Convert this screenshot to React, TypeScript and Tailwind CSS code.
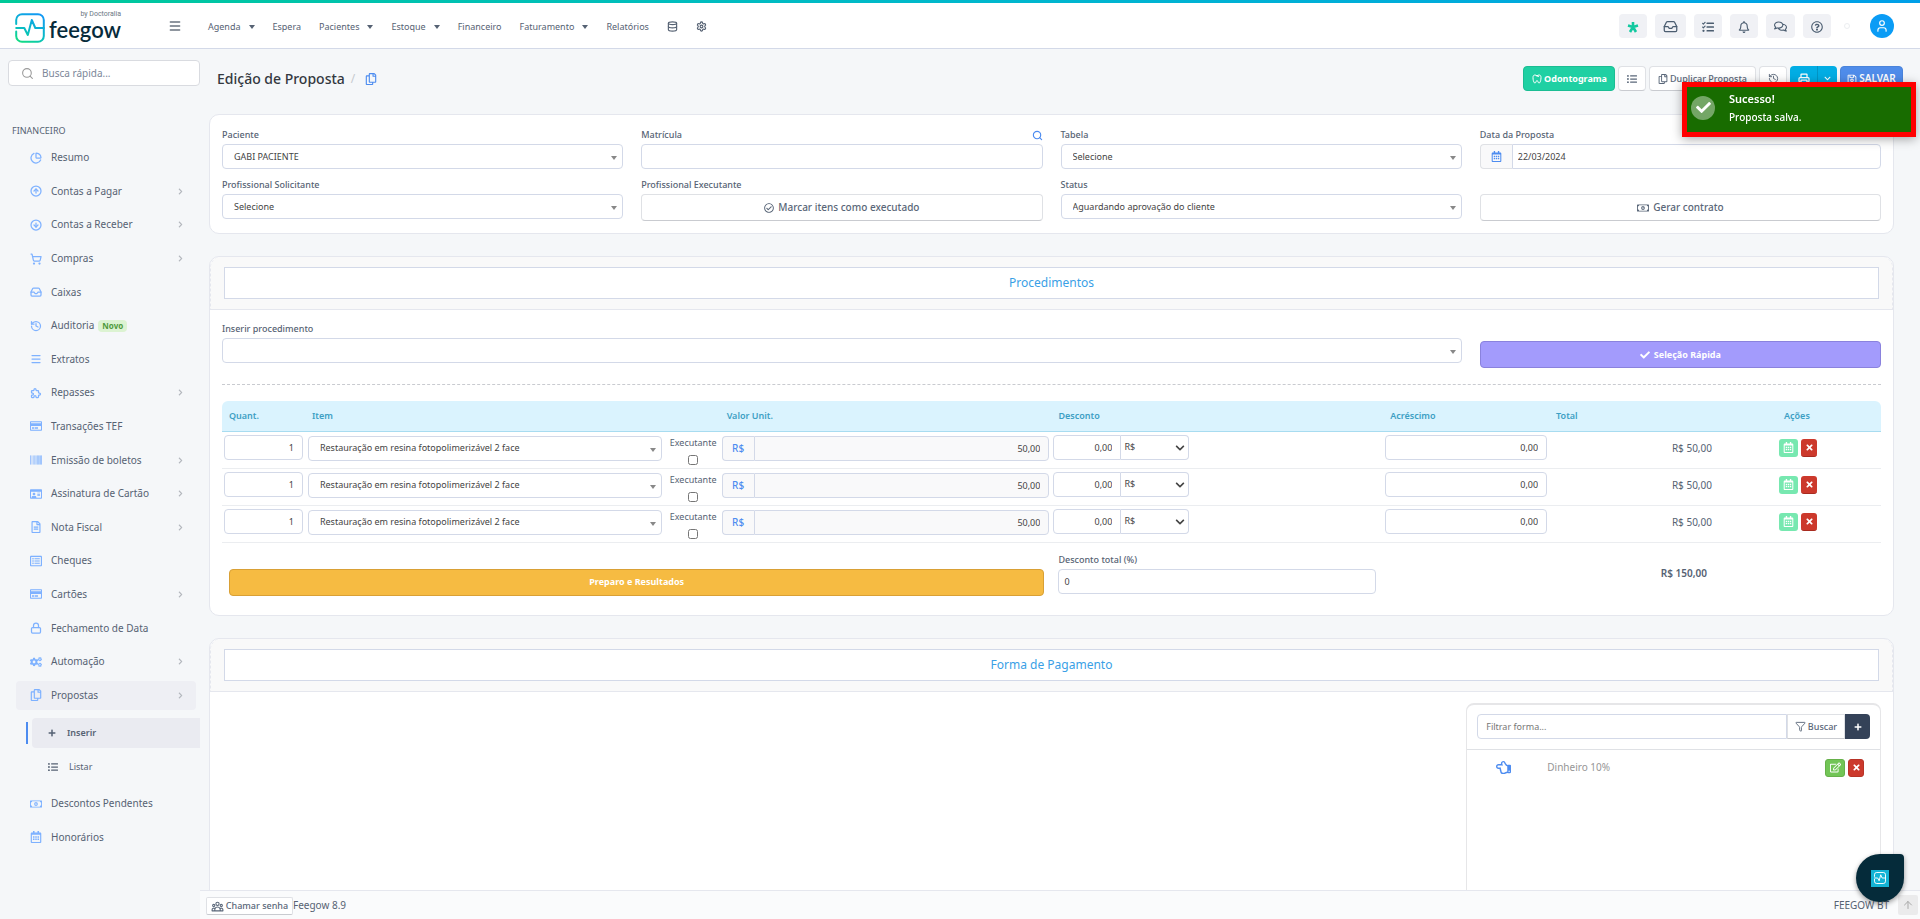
import { useState, type ReactNode } from "react";
import clsx from "clsx";
import type { IconType } from "react-icons";
import {
  FaBarcode,
  FaCheck,
  FaChevronDown,
  FaChevronRight,
  FaCogs,
  FaListUl,
  FaPlus,
  FaRegBell,
  FaRegCalendarAlt,
  FaRegCheckCircle,
  FaRegComments,
  FaRegCopy,
  FaRegCreditCard,
  FaRegEdit,
  FaRegFileAlt,
  FaRegHandPointLeft,
  FaRegIdCard,
  FaRegListAlt,
  FaRegMoneyBillAlt,
  FaRegQuestionCircle,
  FaRegSave,
  FaTasks,
  FaTimes,
} from "react-icons/fa";
import { HiOutlineUserGroup } from "react-icons/hi";
import { TbDental, TbPuzzle } from "react-icons/tb";
import {
  ArrowUp,
  ChartPie,
  CircleArrowDown,
  CircleArrowUp,
  Database,
  Funnel,
  History,
  Inbox,
  Lock,
  Menu,
  Printer,
  Search,
  Settings,
  ShoppingCart,
  User,
} from "lucide-react";

type Icon = IconType | typeof Menu;

interface MenuItem {
  label: string;
  icon: Icon;
  arrow?: boolean;
  badge?: string;
  active?: boolean;
}

const topMenu = [
  { label: "Agenda", caret: true },
  { label: "Espera" },
  { label: "Pacientes", caret: true },
  { label: "Estoque", caret: true },
  { label: "Financeiro" },
  { label: "Faturamento", caret: true },
  { label: "Relatórios" },
];

const sideMenu: MenuItem[] = [
  { label: "Resumo", icon: ChartPie },
  { label: "Contas a Pagar", icon: CircleArrowUp, arrow: true },
  { label: "Contas a Receber", icon: CircleArrowDown, arrow: true },
  { label: "Compras", icon: ShoppingCart, arrow: true },
  { label: "Caixas", icon: Inbox },
  { label: "Auditoria", icon: History, badge: "Novo" },
  { label: "Extratos", icon: Menu },
  { label: "Repasses", icon: TbPuzzle, arrow: true },
  { label: "Transações TEF", icon: FaRegCreditCard },
  { label: "Emissão de boletos", icon: FaBarcode, arrow: true },
  { label: "Assinatura de Cartão", icon: FaRegIdCard, arrow: true },
  { label: "Nota Fiscal", icon: FaRegFileAlt, arrow: true },
  { label: "Cheques", icon: FaRegListAlt },
  { label: "Cartões", icon: FaRegCreditCard, arrow: true },
  { label: "Fechamento de Data", icon: Lock },
  { label: "Automação", icon: FaCogs, arrow: true },
  { label: "Propostas", icon: FaRegCopy, arrow: true, active: true },
];

const sideMenuEnd: MenuItem[] = [
  { label: "Descontos Pendentes", icon: FaRegMoneyBillAlt },
  { label: "Honorários", icon: FaRegCalendarAlt },
];

const items = [1, 2, 3].map((id) => ({ id, name: "Restauração em resina fotopolimerizável 2 face" }));

const field = "block h-[25px] w-full rounded border border-[#d3d9e8] text-[9px] text-[#444] outline-none";
const defaultButton = "rounded border border-[#dfe1e5] border-b-[#c9cbd0] bg-white text-[#5a6779]";

function Caret({ className }: { className?: string }) {
  return (
    <svg viewBox="0 0 6 4" className={clsx("w-1.5 fill-current", className)} aria-hidden="true">
      <path d="M0 0h6L3 4z" />
    </svg>
  );
}

function Pulse() {
  return (
    <g fill="none" strokeLinecap="round" strokeLinejoin="round">
      <path d="M1.2 11V7a5.8 5.8 0 0 1 5.8-5.8h16a5.8 5.8 0 0 1 5.8 5.8v8h-8.5l-3.5-8-4 15-3.5-7H1.2" />
      <path d="M1.2 18.500V23a5.8 5.8 0 0 0 5.8 5.8h16a5.8 5.8 0 0 0 5.8-5.8v-8" />
    </g>
  );
}

function Logo() {
  return (
    <a href="#" className="flex items-center gap-1" aria-label="feegow by Doctoralia">
      <svg viewBox="0 0 30 30" className="mt-1 h-[30px] w-[30px] shrink-0" stroke="url(#brand)" strokeWidth="2">
        <defs>
          <linearGradient id="brand" x1="22" y1="0" x2="8" y2="30" gradientUnits="userSpaceOnUse">
            <stop offset="0" stopColor="#1298f5" />
            <stop offset="0.6" stopColor="#08bcc4" />
            <stop offset="1" stopColor="#12dc84" />
          </linearGradient>
        </defs>
        <Pulse />
      </svg>
      <span className="flex flex-col items-end">
        <span className="font-[Roboto] text-[7px] leading-2 text-[#6a7783]">by Doctoralia</span>
        <span className="font-[Lato] text-[22px] leading-6 font-semibold text-[#062b3b]">feegow</span>
      </span>
    </a>
  );
}

function HeaderButton({ label, children }: { label: string; children: ReactNode }) {
  return (
    <button
      type="button"
      aria-label={label}
      className="flex h-6 items-center justify-center rounded bg-[#f0f1f5] px-2 pt-0.5 text-[#4b5d70]"
    >
      {children}
    </button>
  );
}

function Header() {
  return (
    <header className="shrink-0 border-b border-[#d3d9e8] bg-white">
      <div className="h-[3px] bg-linear-to-r from-[#00c998] via-[#00b8cc] to-[#009fe8]" />
      <div className="flex h-[45px] items-center">
        <div className="flex w-[200px] shrink-0 items-center justify-between pr-[18px] pl-[15px]">
          <Logo />
          <button type="button" aria-label="Menu" className="text-[#6b7480]">
            <Menu size={14} strokeWidth={2.5} />
          </button>
        </div>
        <nav className="flex items-center gap-[18px] pt-0.5 pl-2 text-[9px] text-[#566273]">
          {topMenu.map((item) => (
            <a key={item.label} href="#" className="flex items-center gap-2">
              {item.label}
              {item.caret && <Caret className="h-1" />}
            </a>
          ))}
          <a href="#" aria-label="Dados">
            <Database size={11} strokeWidth={2.5} />
          </a>
          <a href="#" aria-label="Configurações">
            <Settings size={11} strokeWidth={2.5} />
          </a>
        </nav>
        <div className="ml-auto flex items-center gap-2 pr-[26px]">
          <HeaderButton label="Novidades">
            <svg viewBox="0 0 12 12" className="h-3 w-3" stroke="#12c9a0" strokeWidth="2.6" aria-hidden="true">
              <path d="M6 1v5M1 4.500l5 1.500M11 4.500L6 6M3 11l3-5M9 11L6 6" />
            </svg>
          </HeaderButton>
          <HeaderButton label="Caixa">
            <Inbox size={15} />
          </HeaderButton>
          <HeaderButton label="Tarefas">
            <FaTasks size={12} />
          </HeaderButton>
          <HeaderButton label="Notificações">
            <FaRegBell size={12} />
          </HeaderButton>
          <HeaderButton label="Mensagens">
            <FaRegComments size={13} />
          </HeaderButton>
          <HeaderButton label="Ajuda">
            <FaRegQuestionCircle size={12} />
          </HeaderButton>
          <span className="mr-3 ml-[5px] h-1.5 w-1.5 rounded-full border border-[#eceef1]" />
          <button
            type="button"
            aria-label="Perfil"
            className="flex h-6 w-6 items-center justify-center rounded-full bg-[#0a9cf5] text-white"
          >
            <User size={14} strokeWidth={2} />
          </button>
        </div>
      </div>
    </header>
  );
}

function SideLink({ item }: { item: MenuItem }) {
  const ItemIcon = item.icon;
  return (
    <li className="flex items-center pr-1 pl-4">
      <a
        href="#"
        className={clsx("flex h-[29px] w-full items-center rounded pr-3 pl-3.5", item.active && "bg-[#eeeff4]")}
      >
        <ItemIcon size={12} strokeWidth={2.5} className="shrink-0 text-[#7fb2ff]" />
        <span className="ml-[9px]">{item.label}</span>
        {item.badge && (
          <span className="ml-1 rounded-sm bg-[#dcf3d2] px-1 text-[8px] leading-3 font-bold text-[#4f9a3c]">
            {item.badge}
          </span>
        )}
        {item.arrow && <FaChevronRight size={7} className="ml-auto text-[#b3b7bd]" />}
      </a>
    </li>
  );
}

function Sidebar() {
  return (
    <aside className="w-[200px] shrink-0 overflow-hidden text-[10px] text-[#566273]">
      <div className="pt-[11px] pl-2">
        <label className="flex h-[26px] items-center gap-2 rounded border border-[#d9dbe0] bg-white pl-3">
          <Search size={13} className="shrink-0 text-[#9a9a9a]" />
          <input
            type="search"
            aria-label="Busca rápida"
            placeholder="Busca rápida..."
            className="w-full text-[10px] outline-none placeholder:text-[#7c8799]"
          />
        </label>
      </div>
      <h2 className="mt-[38px] pl-3 text-[9px] leading-[14px]">FINANCEIRO</h2>
      <ul className="mt-[3px] grid h-[571px] auto-rows-fr">
        {sideMenu.map((item) => (
          <SideLink key={item.label} item={item} />
        ))}
      </ul>
      <ul className="mt-1.5 pl-[26px]">
        <li className="flex h-[30px] items-center">
          <span className="h-[22px] w-0.5 bg-[#4d8cf0]" />
          <a href="#" className="ml-1 flex h-full flex-1 items-center gap-[11px] rounded-l bg-[#eaebf1] pl-4 text-[9px] font-semibold">
            <FaPlus size={8} />
            Inserir
          </a>
        </li>
        <li className="mt-1 flex h-[30px] items-center pl-[22px]">
          <a href="#" className="flex items-center gap-[11px] text-[9px]">
            <FaListUl size={10} />
            Listar
          </a>
        </li>
      </ul>
      <ul className="mt-[5px] grid h-[67px] auto-rows-fr">
        {sideMenuEnd.map((item) => (
          <SideLink key={item.label} item={item} />
        ))}
      </ul>
    </aside>
  );
}

function PageTitle() {
  return (
    <div className="flex items-center justify-between pt-[17px] pb-[23px] pl-2">
      <div className="flex items-center gap-1.5">
        <h1 className="text-sm font-medium text-[#333840]">Edição de Proposta</h1>
        <span className="text-xs text-[#c6cacf]">/</span>
        <FaRegCopy size={12} className="ml-1 text-[#4d8cf0]" />
      </div>
      <div className="-mr-[9px] flex h-[25px] items-stretch gap-[3px] text-[9px]">
        <button
          type="button"
          className="flex items-center justify-center gap-px rounded border border-[#1bbd93] bg-[#1fd0a3] px-[7px] font-bold text-white"
        >
          <TbDental size={12} />
          Odontograma
        </button>
        <button type="button" aria-label="Lista" className={clsx(defaultButton, "flex w-7 items-center justify-center")}>
          <FaListUl size={10} />
        </button>
        <button type="button" className={clsx(defaultButton, "flex w-[107px] items-center justify-center gap-0.5 font-medium")}>
          <FaRegCopy size={10} />
          Duplicar Proposta
        </button>
        <button type="button" aria-label="Histórico" className={clsx(defaultButton, "flex w-7 items-center justify-center")}>
          <History size={11} />
        </button>
        <div className="flex rounded bg-[#02ade4] text-white">
          <button type="button" aria-label="Imprimir" className="flex w-7 items-center justify-center border-r border-[#0295c5]">
            <Printer size={12} strokeWidth={2.5} />
          </button>
          <button type="button" aria-label="Opções" className="flex w-[19px] items-center justify-center">
            <FaChevronDown size={7} />
          </button>
        </div>
        <button
          type="button"
          className="flex w-[63px] items-center justify-center gap-0.5 rounded border border-[#4a84db] bg-[#4f8cea] text-[10px] font-semibold text-white"
        >
          <FaRegSave size={10} />
          SALVAR
        </button>
      </div>
    </div>
  );
}

function SelectField({ id, value, label }: { id: string; value: string; label?: string }) {
  return (
    <div className="relative">
      <select id={id} aria-label={label} className={clsx(field, "appearance-none bg-white pr-5 pl-[11px]")}>
        <option>{value}</option>
      </select>
      <Caret className="pointer-events-none absolute top-3 right-1.5 h-1 text-[#888]" />
    </div>
  );
}

function Label({ htmlFor, children }: { htmlFor: string; children: ReactNode }) {
  return (
    <label htmlFor={htmlFor} className="block text-[9px] leading-[18px] font-medium text-[#566273]">
      {children}
    </label>
  );
}

function ProposalForm() {
  return (
    <section className="grid grid-cols-4 gap-x-[18px] gap-y-[7px] rounded-[10px] border border-[#e5e7ee] bg-white px-3 pt-[11px] pb-3">
      <div>
        <Label htmlFor="paciente">Paciente</Label>
        <SelectField id="paciente" value="GABI PACIENTE" />
      </div>
      <div>
        <div className="flex items-center justify-between">
          <Label htmlFor="matricula">Matrícula</Label>
          <Search size={11} strokeWidth={2.5} className="text-[#4d8cf0]" />
        </div>
        <input id="matricula" className={clsx(field, "bg-white px-2")} />
      </div>
      <div>
        <Label htmlFor="tabela">Tabela</Label>
        <SelectField id="tabela" value="Selecione" />
      </div>
      <div>
        <Label htmlFor="data">Data da Proposta</Label>
        <div className="flex">
          <span className="flex w-8 shrink-0 items-center justify-center rounded-l border border-r-0 border-[#dfe1e5] bg-[#f9f9fa]">
            <FaRegCalendarAlt size={11} className="text-[#4d8cf0]" />
          </span>
          <input id="data" defaultValue="22/03/2024" className={clsx(field, "rounded-l-none bg-white px-[5px]")} />
        </div>
      </div>
      <div>
        <Label htmlFor="solicitante">Profissional Solicitante</Label>
        <SelectField id="solicitante" value="Selecione" />
      </div>
      <div>
        <Label htmlFor="executante">Profissional Executante</Label>
        <button
          id="executante"
          type="button"
          className={clsx(defaultButton, "flex h-[27px] w-full items-center justify-center gap-1 text-[10px] font-medium")}
        >
          <FaRegCheckCircle size={10} />
          Marcar itens como executado
        </button>
      </div>
      <div>
        <Label htmlFor="status">Status</Label>
        <SelectField id="status" value="Aguardando aprovação do cliente" />
      </div>
      <button
        type="button"
        className={clsx(defaultButton, "flex h-[27px] items-center justify-center gap-1 self-end text-[10px] font-medium")}
      >
        <FaRegMoneyBillAlt size={12} />
        Gerar contrato
      </button>
    </section>
  );
}

function SectionHeader({ title }: { title: string }) {
  return (
    <div className="rounded-t-[10px] border-x border-b border-x-[#e5e7ee] border-b-[#e5e7ee] bg-[#f9f9f9] px-[13px] py-2.5 [border-left-style:dashed] [border-right-style:dashed]">
      <h2 className="border border-[#d3d9e8] bg-white text-center text-xs leading-[30px] text-[#3a9fe6]">{title}</h2>
    </div>
  );
}

function ItemRow({ id, name }: { id: number; name: string }) {
  return (
    <tr className="h-[37px] border-b border-[#ebedf0] align-top">
      <td className="px-0.5 pt-[3px]">
        <input aria-label="Quantidade" defaultValue="1" className={clsx(field, "bg-white px-2 text-right")} />
      </td>
      <td className="px-[3px] pt-1">
        <SelectField id={`item-${id}`} value={name} label="Item" />
      </td>
      <td className="pt-0.5 pl-0.5 text-center">
        <label className="flex flex-col items-center text-[9px] leading-[18px] text-[#566273]">
          Executante
          <input type="checkbox" className="mt-[3px] h-2.5 w-2.5" />
        </label>
      </td>
      <td className="px-0.5 pt-1">
        <label className="flex">
          <span className="flex w-8 shrink-0 items-center justify-center rounded-l border border-r-0 border-[#d3d9e8] bg-[#f9f9fa] text-[10px] font-medium text-[#4d8cf0]">
            R$
          </span>
          <input readOnly defaultValue="50,00" className={clsx(field, "rounded-l-none bg-[#f9f9fa] px-2 text-right")} />
        </label>
      </td>
      <td className="px-0.5 pt-[3px]">
        <div className="grid w-[136px] grid-cols-2">
          <input aria-label="Desconto" defaultValue="0,00" className={clsx(field, "rounded-r-none bg-white px-2 text-right")} />
          <div className="relative">
            <select
              aria-label="Tipo de desconto"
              className={clsx(field, "appearance-none rounded-l-none border-l-0 bg-white pl-[3px]")}
            >
              <option>R$</option>
              <option>%</option>
            </select>
            <FaChevronDown size={10} className="pointer-events-none absolute top-2 right-1 text-[#444]" />
          </div>
        </div>
      </td>
      <td className="px-0.5 pt-[3px]">
        <input aria-label="Acréscimo" defaultValue="0,00" className={clsx(field, "bg-white px-2 text-right")} />
      </td>
      <td className="pt-2 pr-[3px] text-right text-[10px] leading-4 text-[#566273]">R$ 50,00</td>
      <td />
      <td className="pt-[7px] pl-0.5">
        <div className="flex gap-[3px] text-white">
          <button type="button" aria-label="Agendar" className="flex h-[18px] w-[19px] items-center justify-center rounded-[3px] bg-[#77e8b0]">
            <FaRegCalendarAlt size={11} />
          </button>
          <button
            type="button"
            aria-label="Remover"
            className="flex h-[18px] w-4 items-center justify-center rounded-[3px] border-b border-[#a82b20] bg-[#cc392c]"
          >
            <FaTimes size={9} />
          </button>
        </div>
      </td>
    </tr>
  );
}

function Procedures() {
  return (
    <section className="rounded-[10px] border border-[#e5e7ee] bg-white">
      <SectionHeader title="Procedimentos" />
      <div className="px-3 pt-2.5 pb-[19px]">
        <div className="grid grid-cols-4 gap-x-[18px]">
          <div className="col-span-3">
            <Label htmlFor="procedimento">Inserir procedimento</Label>
            <SelectField id="procedimento" value="" />
          </div>
          <button
            type="button"
            className="mt-[21px] flex h-[27px] items-center justify-center gap-1 rounded border border-[#8a82dd] bg-[#a39bfc] text-[9px] font-bold text-white"
          >
            <FaCheck size={10} />
            Seleção Rápida
          </button>
        </div>
        <hr className="mt-4 border-dashed border-[#c9cbd0]" />
        <table className="mt-4 w-full table-fixed">
          <thead>
            <tr className="h-[30px] border-b border-[#a8dcf0] text-left text-[9px] text-[#3d9fc4] [&>th]:bg-[#daf3fe] [&>th]:px-[7px] [&>th]:font-semibold">
              <th className="w-[5%] rounded-tl-md">Quant.</th>
              <th>Item</th>
              <th className="w-[55px]" />
              <th className="w-[20%]">Valor Unit.</th>
              <th className="w-[20%]">Desconto</th>
              <th className="w-[10%]">Acréscimo</th>
              <th className="w-[10%]">Total</th>
              <th className="w-[62px]" />
              <th className="w-[104px] rounded-tr-md">Ações</th>
            </tr>
          </thead>
          <tbody>
            {items.map((item) => (
              <ItemRow key={item.id} {...item} />
            ))}
          </tbody>
          <tfoot>
            <tr className="align-top">
              <td colSpan={4} className="px-[7px] pt-[26px]">
                <button
                  type="button"
                  className="block h-[27px] w-full rounded border border-[#d9a035] bg-[#f6bb42] text-[9px] font-bold text-white"
                >
                  Preparo e Resultados
                </button>
              </td>
              <td className="px-[7px] pt-2">
                <Label htmlFor="desconto-total">Desconto total (%)</Label>
                <input id="desconto-total" defaultValue="0" className={clsx(field, "bg-white px-[5px]")} />
              </td>
              <td />
              <td className="pt-[22px] pr-2 text-right text-[10px] leading-4 font-semibold text-[#566273]">R$ 150,00</td>
              <td colSpan={2} />
            </tr>
          </tfoot>
        </table>
      </div>
    </section>
  );
}

function Payment() {
  return (
    <section className="min-h-[400px] rounded-[10px] border border-[#e5e7ee] bg-white">
      <SectionHeader title="Forma de Pagamento" />
      <div className="flex justify-end px-3 pt-[11px]">
        <div className="min-h-[340px] w-1/4 rounded-t-lg border border-t-2 border-[#e6e6e8]">
          <div className="flex h-[45px] items-center border-b border-[#dfe1e5] px-2.5">
            <input
              aria-label="Filtrar forma"
              placeholder="Filtrar forma..."
              className={clsx(field, "min-w-0 flex-1 rounded-r-none bg-white px-2 placeholder:text-[#777]")}
            />
            <button
              type="button"
              className={clsx(defaultButton, "flex h-[25px] w-[58px] items-center justify-center gap-0.5 rounded-none text-[9px] font-medium")}
            >
              <Funnel size={11} />
              Buscar
            </button>
            <button type="button" aria-label="Adicionar" className="flex h-[25px] w-[25px] items-center justify-center rounded-r bg-[#344258] text-white">
              <FaPlus size={8} />
            </button>
          </div>
          <div className="flex items-center pt-[9px] pr-4 pl-[29px]">
            <FaRegHandPointLeft size={15} className="text-[#4d8cf0]" />
            <span className="ml-9 text-[10px] text-[#969696]">Dinheiro 10%</span>
            <div className="ml-auto flex gap-[3px] text-white">
              <button
                type="button"
                aria-label="Editar"
                className="flex h-[18px] w-5 items-center justify-center rounded-[3px] border border-[#66b14a] bg-[#72c556]"
              >
                <FaRegEdit size={11} />
              </button>
              <button
                type="button"
                aria-label="Excluir"
                className="flex h-[18px] w-4 items-center justify-center rounded-[3px] border border-[#b83327] bg-[#cc392c]"
              >
                <FaTimes size={9} />
              </button>
            </div>
          </div>
        </div>
      </div>
    </section>
  );
}

function Footer() {
  return (
    <footer className="flex h-[29px] shrink-0 items-center border-t border-[#e5e7ee] bg-[#fafbfc] pr-0.5 pl-1.5 text-[10px] text-[#566273]">
      <button
        type="button"
        className={clsx(defaultButton, "mt-0.5 flex h-[18px] w-[87px] items-center justify-center gap-0.5 rounded-xs text-[9px] font-medium")}
      >
        <HiOutlineUserGroup size={13} />
        Chamar senha
      </button>
      <span>Feegow 8.9</span>
      <span className="mr-[9px] ml-auto">FEEGOW BT</span>
      <button type="button" aria-label="Voltar ao topo" className="flex h-5 w-5 items-center justify-center rounded-xs bg-[#ebebec] text-[#a9a9a9]">
        <ArrowUp size={12} />
      </button>
    </footer>
  );
}

function Toast({ onClose }: { onClose: () => void }) {
  return (
    <div
      role="alert"
      onClick={onClose}
      className="fixed top-[82px] right-1 flex h-[55px] w-[234px] items-center gap-3.5 border-[5px] border-[#ff0000] bg-[#186c00] pb-1 pl-1 text-white shadow-[0_2px_10px_rgba(0,0,0,0.35)]"
    >
      <span className="flex h-6 w-6 items-center justify-center rounded-full bg-white/40">
        <FaCheck size={15} />
      </span>
      <div className="text-[10px] leading-[19px]">
        <p className="text-[11px] font-semibold">Sucesso!</p>
        <p className="font-medium">Proposta salva.</p>
      </div>
    </div>
  );
}

function ChatButton() {
  return (
    <button
      type="button"
      aria-label="Abrir atendimento"
      className="fixed right-4 bottom-[17px] flex h-12 w-12 items-center justify-center rounded-3xl rounded-tr-sm bg-[#052b3a] shadow-[0_2px_5px_rgba(0,0,0,0.4)]"
    >
      <span className="flex h-[17px] w-[18px] items-center justify-center bg-[#14b4d6]">
        <svg viewBox="0 0 30 30" className="h-3 w-3" stroke="#fff" strokeWidth="2.4">
          <Pulse />
        </svg>
      </span>
    </button>
  );
}

export default function App() {
  const [toastOpen, setToastOpen] = useState(true);

  return (
    <div className="flex h-screen flex-col bg-[#f5f7f9] font-['Noto_Sans',sans-serif]">
      <Header />
      <div className="flex min-h-0 flex-1">
        <Sidebar />
        <div className="flex min-w-0 flex-1 flex-col">
          <main className="flex min-h-0 flex-1 flex-col overflow-hidden pr-[26px] pl-[9px] *:shrink-0">
            <PageTitle />
            <div className="space-y-[22px]">
              <ProposalForm />
              <Procedures />
              <Payment />
            </div>
          </main>
          <Footer />
        </div>
      </div>
      {toastOpen && <Toast onClose={() => setToastOpen(false)} />}
      <ChatButton />
    </div>
  );
}
